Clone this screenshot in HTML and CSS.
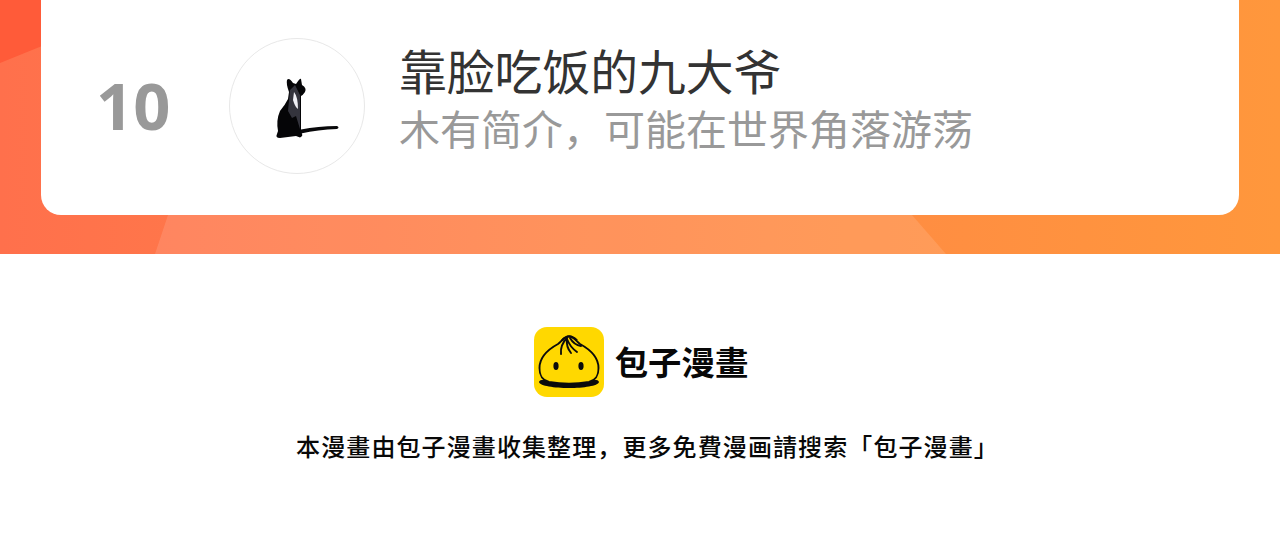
FILE: index.html
```html
<!DOCTYPE html>
<html lang="zh-Hans">
<head>
  <meta charset="UTF-8">
  <title>包子漫畫</title>
  <link rel="stylesheet" href="styles.css">
</head>
<body>
  <div class="ranking">
    <svg class="ranking-bg" viewBox="0 0 1280 254" preserveAspectRatio="none">
      <path d="M0 0H42V46L0 63Z" fill="#ff5b39"/>
      <path d="M168 215H912L946 254H155Z" fill="#fff" fill-opacity="0.12"/>
    </svg>
    <div class="card">
      <div class="rank">10</div>
      <div class="avatar">
        <svg width="134" height="134" viewBox="0 0 134 134">
          <path d="M71 90.500Q88 87 107 87Q110 88.500 107 90Q88 90.500 71 94.500Z" fill="#08080a"/>
          <path d="M59 53Q56 45 57 41Q59 38 63 44L66 45Q70 39 71 40L72 46Q77 49 75 53Q73 56 71 57L71 93Q74 97 70 98.500L66 97L50 99Q45 99 47 95L48 92Q46 81 50 72Q55 66 58 60Z" fill="#050507"/>
          <path d="M60 51L65 46L70 56L70 90L66 77L62 79L58 72Z" fill="#34343d"/>
          <path d="M64 53Q68 58 68 70Q65 68 63 61Z" fill="#f0f0f5"/>
        </svg>
      </div>
      <div class="info">
        <div class="name">靠脸吃饭的九大爷</div>
        <div class="desc">木有简介，可能在世界角落游荡</div>
      </div>
    </div>
  </div>

  <div class="footer">
    <div class="brand">
      <svg class="logo" width="70" height="70" viewBox="0 0 70 70">
        <rect width="70" height="70" rx="13" fill="#ffd800"/>
        <path d="M5 55Q6 52 12 53H58Q64 52 65 55C63 63 7 63 5 55Z" fill="#0b0b0b"/>
        <path d="M35 9.500C30 9.500 28 14 24 17C13 23 5.500 31 5.500 41C5.500 49 8 53 15 55Q35 58.500 55 55C62 53 64.500 49 64.500 41C64.500 31 57 23 46 17C42 14 40 9.500 35 9.500Z" fill="#ffd800" stroke="#0b0b0b" stroke-width="1.900"/>
        <path d="M27 27Q26 18 33 11M37 26Q32 20 33 12Q36 20 43 25M36 11Q40 18 47 19" fill="none" stroke="#0b0b0b" stroke-width="1.900" stroke-linecap="round"/>
        <path d="M28 13.500Q35 5 43 13.500" fill="none" stroke="#0b0b0b" stroke-width="2.200"/>
        <ellipse cx="22" cy="39" rx="2.600" ry="4" fill="#0b0b0b"/>
        <ellipse cx="47" cy="39" rx="2.600" ry="4" fill="#0b0b0b"/>
      </svg>
      <span class="brand-name" lang="zh-Hant">包子漫畫</span>
    </div>
    <p class="notice">本漫畫由包子漫畫收集整理，更多免費漫画請搜索「包子漫畫」</p>
  </div>
</body>
</html>
```
FILE: styles.css
```css
* {
  box-sizing: border-box;
}
body {
  margin: 0;
  background-color: #fff;
  font-family: "Noto Sans CJK SC", sans-serif;
}
.ranking {
  position: relative;
  height: 254px;
  padding: 0 41px 39px;
  background: linear-gradient(90deg, #ff704c 0%, #ff8a44 60%, #ff973c 100%);
}
.ranking-bg {
  position: absolute;
  top: 0;
  left: 0;
  width: 100%;
  height: 100%;
}
.card {
  position: relative;
  display: flex;
  align-items: flex-start;
  height: 215px;
  background-color: #fff;
  border-radius: 0 0 20px 20px;
}
.rank {
  width: 188px;
  padding: 72px 0 0 55px;
  color: #999;
  font-family: "Open Sans", "Noto Sans", sans-serif;
  font-size: 65px;
  font-weight: 700;
  line-height: 67px;
}
.avatar {
  width: 136px;
  height: 136px;
  margin-top: 38px;
  border: 1px solid #e8e8e8;
  border-radius: 50%;
}
.info {
  margin: 40px 0 0 34px;
  white-space: nowrap;
}
.name {
  color: #333;
  font-size: 47.8px;
  font-weight: 400;
  line-height: 60px;
}
.desc {
  color: #999;
  font-size: 41px;
  font-weight: 400;
  line-height: 54px;
}
.footer {
  display: flex;
  flex-direction: column;
  align-items: center;
  padding-top: 73px;
}
.brand {
  display: flex;
  align-items: center;
  gap: 11px;
  padding-left: 2px;
}
.brand-name {
  padding-bottom: 3px;
  color: #080808;
  font-family: "Noto Sans CJK TC", sans-serif;
  font-size: 33.4px;
  font-weight: 700;
  line-height: 67px;
}
.notice {
  margin: 31px 0 0;
  padding-left: 15px;
  color: #080808;
  font-size: 24px;
  font-weight: 500;
  letter-spacing: 1.1px;
  line-height: 36px;
}
```
